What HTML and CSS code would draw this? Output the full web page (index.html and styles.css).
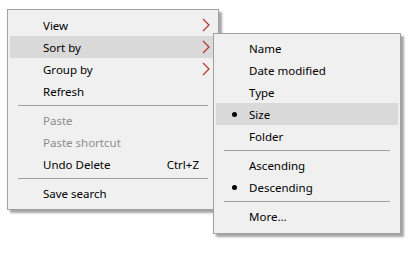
FILE: index.html
```html
<!DOCTYPE html>
<html lang="en">
<head>
    <meta charset="UTF-8">
    <title>Context menu</title>
    <link rel="stylesheet" href="styles.css">
</head>
<body>
    <div class="desk">
        <ul class="menu main-menu">
            <li class="item">View<svg class="arrow" viewBox="0 0 8 14"><path d="M1 1 L7 7 L1 13"/></svg></li>
            <li class="item hover">Sort by<svg class="arrow" viewBox="0 0 8 14"><path d="M1 1 L7 7 L1 13"/></svg></li>
            <li class="item">Group by<svg class="arrow" viewBox="0 0 8 14"><path d="M1 1 L7 7 L1 13"/></svg></li>
            <li class="item">Refresh</li>
            <li class="sep"></li>
            <li class="item disabled">Paste</li>
            <li class="item disabled">Paste shortcut</li>
            <li class="item">Undo Delete<span class="key">Ctrl+Z</span></li>
            <li class="sep"></li>
            <li class="item">Save search</li>
        </ul>

        <ul class="menu sub-menu">
            <li class="item">Name</li>
            <li class="item">Date modified</li>
            <li class="item">Type</li>
            <li class="item hover checked">Size</li>
            <li class="item">Folder</li>
            <li class="sep"></li>
            <li class="item">Ascending</li>
            <li class="item checked">Descending</li>
            <li class="sep"></li>
            <li class="item">More...</li>
        </ul>
    </div>
</body>
</html>
```

FILE: styles.css
```css
body {
    margin: 0;
    background-color: #fff;
    font-family: "Noto Sans", "Open Sans", sans-serif;
    font-size: 11.5px;
    color: #000;
}
.desk {
    position: relative;
    width: 419px;
    height: 262px;
    padding: 9px 0 0 7px;
    box-sizing: border-box;
}
.menu {
    list-style: none;
    margin: 0;
    padding: 4px 2px 5px 2px;
    background-color: #f0f0f0;
    border: 1px solid #a0a0a0;
    box-shadow: 3px 3px 2px rgba(0, 0, 0, 0.35);
}
.main-menu {
    width: 206px;
}
.sub-menu {
    position: absolute;
    left: 213px;
    top: 33px;
    width: 182px;
    padding-top: 3px;
    padding-bottom: 6px;
}
.item {
    position: relative;
    display: flex;
    align-items: center;
    height: 22px;
    padding-left: 33px;
    padding-right: 17px;
    white-space: nowrap;
}
.item.hover {
    background-color: #d9d9d9;
}
.item.disabled {
    color: #8d8d8d;
}
.key {
    margin-left: auto;
}
.arrow {
    position: absolute;
    right: 6px;
    top: 4px;
    width: 8px;
    height: 14px;
    fill: none;
    stroke: #b8342a;
    stroke-width: 1.2;
}
.checked::before {
    content: "";
    position: absolute;
    left: 16px;
    top: 9px;
    width: 5px;
    height: 5px;
    border-radius: 50%;
    background-color: #000;
}
.sep {
    height: 7px;
    display: flex;
    align-items: center;
    padding: 0 8px 0 8px;
}
.sep::after {
    content: "";
    flex: 1;
    height: 1px;
    background-color: #a0a0a0;
}
```
